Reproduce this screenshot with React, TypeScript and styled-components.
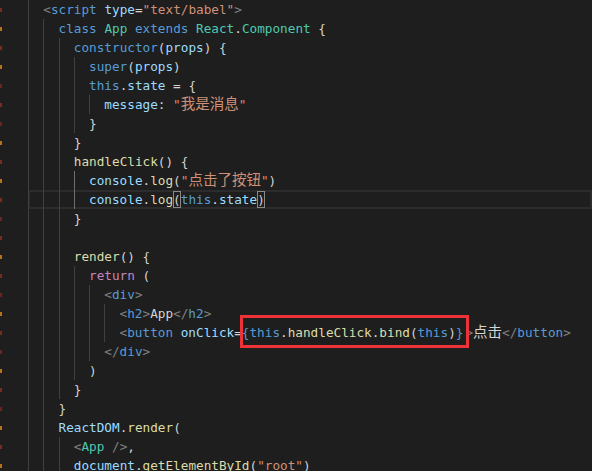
import React from "react";
import styled, { createGlobalStyle } from "styled-components";

const GlobalStyle = createGlobalStyle`
  html, body {
    margin: 0;
    padding: 0;
    background: #1e1e1e;
    overflow: hidden;
  }
`;

// token colours, roughly the Dark+ theme
const C = {
  k: "#569cd6", // keywords, tag names
  v: "#9cdcfe", // variables, attributes
  s: "#ce9178", // strings
  f: "#dcdcaa", // functions
  t: "#4ec9b0", // classes / components
  p: "#808080", // tag punctuation
  c: "#c586c0", // control flow
  d: "#d4d4d4", // default
};

type Tok = [string, keyof typeof C] | { bracket: string } | { box: Tok[] } | { cjk: string; c: keyof typeof C };

interface LineData {
  guides: number;
  active?: number;
  current?: boolean;
  tick?: string;
  toks: Tok[];
}

const Editor = styled.div`
  height: 471px;
  overflow: hidden;
  background: #1e1e1e;
  font-family: "DejaVu Sans Mono", "Liberation Mono", monospace;
  font-size: 12.7px;
  color: #d4d4d4;
`;

const Line = styled.div`
  display: flex;
  height: 19px;
  line-height: 19px;
  white-space: pre;
`;

const Gutter = styled.div`
  flex: none;
  width: 28px;
  display: flex;
  align-items: center;
`;

const Tick = styled.span<{ $color: string }>`
  display: block;
  width: 2px;
  height: 4px;
  background: ${(p) => p.$color};
`;

const Code = styled.div<{ $current?: boolean }>`
  flex: 1;
  height: 19px;
  box-shadow: ${(p) => (p.$current ? "inset 0 0 0 2px #2c2c2c" : "none")};
`;

const Guide = styled.span<{ $active?: boolean }>`
  display: inline-block;
  box-sizing: border-box;
  width: 2ch;
  height: 19px;
  vertical-align: top;
  border-left: 1px solid ${(p) => (p.$active ? "#6e6e6e" : "#404040")};
`;

const Span = styled.span<{ $c: string }>`
  color: ${(p) => p.$c};
`;

const Cjk = styled.span<{ $c: string }>`
  color: ${(p) => p.$c};
  font-family: "Noto Sans CJK SC", sans-serif;
  font-size: 14.5px;
  line-height: 1;
`;

const Bracket = styled.span`
  display: inline-block;
  line-height: 17px;
  box-shadow: inset 0 0 0 1px #8a8a8a;
`;

const Marked = styled.span`
  display: inline-block;
  position: relative;
  margin-right: 2px;
  &::after {
    content: "";
    position: absolute;
    left: -2px;
    right: -6px;
    top: -8px;
    bottom: -6px;
    border: 3px solid #ee3338;
    z-index: 1;
  }
`;

const red = "#7a2c1c";
const org = "#b8721a";
const dark = "#6a2222";

const lines: LineData[] = [
  { guides: 1, tick: red, toks: [["<", "p"], ["script", "k"], [" ", "d"], ["type", "v"], ["=", "d"], ['"text/babel"', "s"], [">", "p"]] },
  { guides: 2, tick: org, toks: [["class", "k"], [" ", "d"], ["App", "t"], [" ", "d"], ["extends", "k"], [" ", "d"], ["React", "t"], [".", "d"], ["Component", "t"], [" {", "d"]] },
  { guides: 3, tick: red, toks: [["constructor", "k"], ["(", "d"], ["props", "v"], [") {", "d"]] },
  { guides: 4, tick: org, toks: [["super", "k"], ["(", "d"], ["props", "v"], [")", "d"]] },
  { guides: 4, tick: dark, toks: [["this", "k"], [".", "d"], ["state", "v"], [" = {", "d"]] },
  { guides: 5, tick: red, toks: [["message", "v"], [": ", "d"], ['"', "s"], { cjk: "我是消息", c: "s" }, ['"', "s"]] },
  { guides: 4, tick: dark, toks: [["}", "d"]] },
  { guides: 3, tick: org, toks: [["}", "d"]] },
  { guides: 3, tick: red, toks: [["handleClick", "f"], ["() {", "d"]] },
  { guides: 4, active: 3, tick: org, toks: [["console", "v"], [".", "d"], ["log", "f"], ["(", "d"], ['"', "s"], { cjk: "点击了按钮", c: "s" }, ['"', "s"], [")", "d"]] },
  { guides: 4, active: 3, current: true, tick: red, toks: [["console", "v"], [".", "d"], ["log", "f"], { bracket: "(" }, ["this", "k"], [".", "d"], ["state", "v"], { bracket: ")" }] },
  { guides: 3, tick: dark, toks: [["}", "d"]] },
  { guides: 3, tick: red, toks: [] },
  { guides: 3, tick: org, toks: [["render", "f"], ["() {", "d"]] },
  { guides: 4, tick: red, toks: [["return", "c"], [" (", "d"]] },
  { guides: 5, tick: dark, toks: [["<", "p"], ["div", "k"], [">", "p"]] },
  { guides: 6, tick: org, toks: [["<", "p"], ["h2", "k"], [">", "p"], ["App", "d"], ["</", "p"], ["h2", "k"], [">", "p"]] },
  {
    guides: 6,
    tick: red,
    toks: [
      ["<", "p"], ["button", "k"], [" ", "d"], ["onClick", "v"], ["=", "d"],
      { box: [["{", "k"], ["this", "k"], [".", "d"], ["handleClick", "f"], [".", "d"], ["bind", "f"], ["(", "d"], ["this", "k"], [")", "d"], ["}", "k"]] },
      [">", "p"], { cjk: "点击", c: "d" }, ["</", "p"], ["button", "k"], [">", "p"],
    ],
  },
  { guides: 5, tick: dark, toks: [["</", "p"], ["div", "k"], [">", "p"]] },
  { guides: 4, tick: org, toks: [[")", "d"]] },
  { guides: 3, tick: red, toks: [["}", "d"]] },
  { guides: 2, tick: dark, toks: [["}", "d"]] },
  { guides: 2, tick: org, toks: [["ReactDOM", "v"], [".", "d"], ["render", "f"], ["(", "d"]] },
  { guides: 3, tick: red, toks: [["<", "p"], ["App", "t"], [" />", "p"], [",", "d"]] },
  { guides: 3, tick: org, toks: [["document", "v"], [".", "d"], ["getElementById", "f"], ["(", "d"], ['"root"', "s"], [")", "d"]] },
];

const renderTok = (t: Tok, i: number): React.ReactNode => {
  if (Array.isArray(t)) return <Span key={i} $c={C[t[1]]}>{t[0]}</Span>;
  if ("bracket" in t) return <Bracket key={i}>{t.bracket}</Bracket>;
  if ("cjk" in t) return <Cjk key={i} $c={C[t.c]}>{t.cjk}</Cjk>;
  return <Marked key={i}>{t.box.map(renderTok)}</Marked>;
};

const App: React.FC = () => {
  return (
    <>
      <GlobalStyle />
      <Editor>
        {lines.map((line, n) => (
          <Line key={n}>
            <Gutter>{line.tick && <Tick $color={line.tick} />}</Gutter>
            <Code $current={line.current}>
              {Array.from({ length: line.guides }).map((_, g) => (
                <Guide key={g} $active={line.active === g} />
              ))}
              {line.toks.map(renderTok)}
            </Code>
          </Line>
        ))}
      </Editor>
    </>
  );
};

export default App;
